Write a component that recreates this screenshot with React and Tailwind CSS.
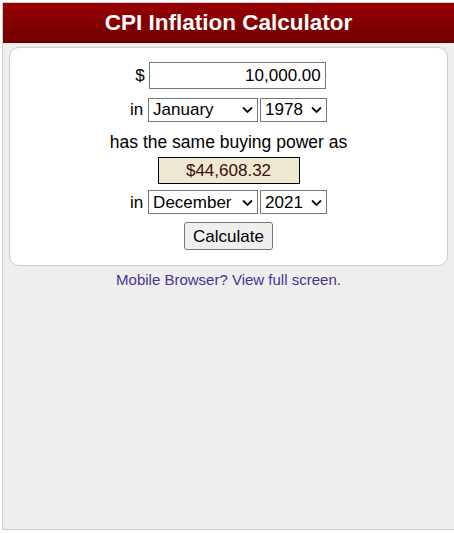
import React from "react";

function Chevron() {
  return (
    <svg
      className="pointer-events-none absolute right-[5px] top-1/2 -translate-y-1/2"
      width="11"
      height="7"
      viewBox="0 0 11 7"
    >
      <path d="M1 1l4.5 4.5L10 1" fill="none" stroke="#111" strokeWidth="1.8" />
    </svg>
  );
}

function Select({ value, width }) {
  return (
    <div className={"relative " + width}>
      <select
        defaultValue={value}
        className="h-[24px] w-full appearance-none border border-[#767676] bg-white pl-[4px] pr-[18px] text-[17px] leading-none text-black"
      >
        <option>{value}</option>
      </select>
      <Chevron />
    </div>
  );
}

export default function App() {
  return (
    <div className="h-[533px] w-[454px] overflow-hidden bg-white pl-[2px] pt-[2px] font-['Liberation_Sans',Arial,sans-serif]">
      <div className="flex h-[528px] flex-col border-l border-t border-b border-[#cccccc] bg-[#eeeeee]">
        <header className="flex h-[40px] items-center justify-center bg-gradient-to-b from-[#9a0000] to-[#6e0000]">
          <h1 className="text-[22.5px] font-bold text-white">CPI Inflation Calculator</h1>
        </header>
        <div className="mx-[6px] mt-[4px] flex flex-col items-center rounded-[10px] border border-[#cccccc] bg-white pb-[15px] pt-[14px] text-[17px] text-black">
          <div className="flex items-center gap-[4px] pl-[4px]">
            <span>$</span>
            <input
              defaultValue="10,000.00"
              className="h-[27px] w-[177px] border border-[#767676] px-[4px] text-right text-[17px]"
            />
          </div>
          <div className="mt-[8px] flex items-center gap-[2px]">
            <span className="mr-[3px]">in</span>
            <Select value="January" width="w-[110px]" />
            <Select value="1978" width="w-[67px]" />
          </div>
          <p className="mt-[6px] text-[17.5px]">has the same buying power as</p>
          <div className="mt-[2px] flex h-[27px] w-[142px] items-center justify-center border border-black bg-[#ede8cf] text-[17px] text-[#3b0d0d]">
            $44,608.32
          </div>
          <div className="mt-[6px] flex items-center gap-[2px]">
            <span className="mr-[3px]">in</span>
            <Select value="December" width="w-[110px]" />
            <Select value="2021" width="w-[67px]" />
          </div>
          <button className="mt-[7px] h-[28px] rounded-[3px] border border-[#767676] bg-[#efefef] px-[8px] text-[17px]">
            Calculate
          </button>
        </div>
        <p className="mt-[3px] text-center text-[15px] text-[#4b3391]">
          Mobile Browser? View full screen.
        </p>
      </div>
    </div>
  );
}
